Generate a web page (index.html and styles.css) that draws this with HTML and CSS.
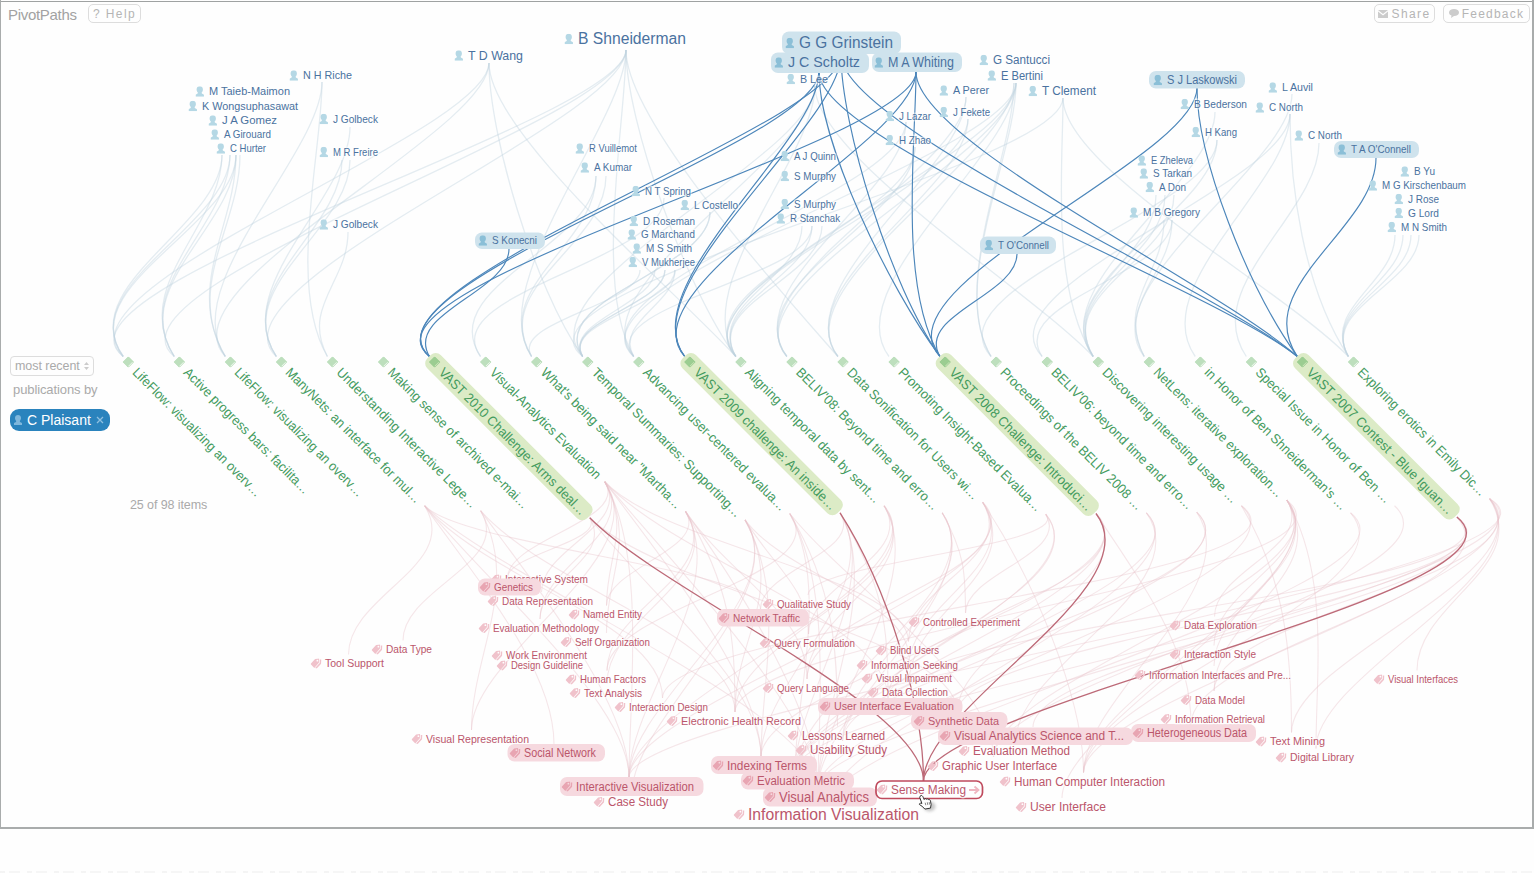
FILE: index.html
```html
<!DOCTYPE html>
<html lang="en">
<head>
<meta charset="utf-8">
<title>PivotPaths</title>
<link rel="stylesheet" href="styles.css">
</head>
<body>
<main class="frame">
  <svg class="canvas" width="1534" height="828" viewBox="0 0 1534 828">
    <defs>
      <symbol id="person" viewBox="0 0 8 10"><path d="M4 0C2.2 0 1 1.2 1 3C1 4.4 1.7 5.4 2.2 6L2 7L0 8V10H8V8L6 7L5.8 6C6.3 5.4 7 4.4 7 3C7 1.2 5.8 0 4 0Z"/></symbol>
      <symbol id="tag" viewBox="0 0 11 10"><path fill-rule="evenodd" d="M0 5.6L4.6 .6L8.6 0L8.4 4.2L3.8 9.4ZM6 2.2a.9.9 0 1 0 1.8 0a.9.9 0 1 0-1.8 0Z"/><path d="M9.2 .9L11 1L10.6 5.2L6.2 10L4.6 9.5L9.2 4.6Z"/></symbol>
      <symbol id="doc" viewBox="0 0 10 10"><path d="M0 1.2L1.6 0H10V8.6L8.6 10H0ZM8.3 1.6V8.8L9 8V1.6Z" fill-rule="evenodd"/></symbol>
    </defs>
    <g id="faint"></g>
    <g id="strong"></g>
    <g id="labels"></g>
    <g id="cursor" transform="translate(918.5 794.5)">
      <ellipse class="cursor-shadow" cx="11" cy="12" rx="6" ry="5"/>
      <path class="hand" d="M2 1.2C3.2.4 4.2 1.6 4.7 2.8L5.7 5C6.2 3.8 7.5 4 7.8 4.8C8.6 4 9.6 4.3 9.9 5.1C11 4.7 11.8 5.4 12 6.6L12.6 10L12 13.6L6.4 14.6L3.4 11.6L.9 10C.6 8.8 1.8 8.3 3.4 9L1.2 2.8Z"/>
      <path class="finger" d="M6.7 8.2l.6 2.5M8.8 7.8l.5 2.6M10.7 7.6l.3 2.4"/>
    </g>
  </svg>
  <div class="overlay">
    <header class="bar">
      <h1 class="brand">PivotPaths</h1>
      <button class="btn help">? Help</button>
      <span class="spacer"></span>
      <button class="btn share"><svg width="10" height="8" viewBox="0 0 10 8"><path d="M0 0H10L5 4ZM0 1.5L5 5.5L10 1.5V8H0Z"/></svg>Share</button>
      <button class="btn feedback"><svg width="10" height="9" viewBox="0 0 10 9"><path d="M5 0C8 0 10 1.4 10 3.5S8 7 5 7L2 9L2.5 6.5C1 6 0 5 0 3.5C0 1.4 2 0 5 0Z"/></svg>Feedback</button>
    </header>
    <aside class="query">
      <div class="select"><span>most recent</span><svg width="5" height="8" viewBox="0 0 5 8"><path d="M0 3L2.5 0L5 3ZM0 5L2.5 8L5 5Z"/></svg></div>
      <p class="by">publications by</p>
      <div class="chip"><svg width="8" height="10"><use href="#person"/></svg><span>C Plaisant</span><svg class="close" width="8" height="8" viewBox="0 0 8 8"><path d="M1 1L7 7M7 1L1 7"/></svg></div>
    </aside>
    <p class="count">25 of 98 items</p>
  </div>
</main>
<div class="page-edge"></div>
<script src="app.js"></script>
</body>
</html>
```
FILE: styles.css
```css
body { margin: 0; background: #fefefe; font-family: "Liberation Sans", Arial, sans-serif; overflow: hidden; height: 873px; display: flex; flex-direction: column; justify-content: space-between; }
.frame { display: grid; box-sizing: border-box; width: 1534px; height: 829px; background: linear-gradient(#9fa2a2, #9fa2a2) 0 1px / 100% 1px no-repeat, #fefefe; border: solid #a9acac; border-width: 0 2px 2px 1px; }
.canvas, .overlay { grid-area: 1 / 1; }
.canvas { display: block; margin-left: -1px; }
.overlay { display: flex; flex-direction: column; align-items: flex-start; min-height: 0; }
.bar { display: flex; align-items: flex-start; width: 1529px; box-sizing: border-box; padding: 4px 0 0 7px; }
.brand { margin: 2px 0 0; width: 80px; font-size: 15px; line-height: 18px; font-weight: 400; letter-spacing: -.3px; color: #a2a2a2; }
.btn { box-sizing: border-box; height: 19px; padding: 0; display: flex; align-items: center; justify-content: center; gap: 3px; background: #fefefe; border: 1px solid #ddd; border-radius: 5px; color: #b5b5b5; font: 12px "Liberation Sans", Arial, sans-serif; letter-spacing: 1.4px; }
.btn svg { fill: #ccc; }
.help { width: 53px; }
.share { width: 61px; margin-right: 8px; }
.feedback { width: 87px; letter-spacing: 1.2px; }
.spacer { flex: 1; }
.query { display: flex; flex-direction: column; align-items: flex-start; margin: 332px 0 0 9px; color: #aaa; font-size: 12.5px; }
.select { box-sizing: border-box; width: 84px; height: 20px; border: 1px solid #ddd; border-radius: 4px; display: flex; align-items: center; justify-content: space-between; padding: 0 4px; white-space: nowrap; letter-spacing: -.05px; }
.select svg { fill: #ccc; }
.by { margin: 6px 0 11px 3px; line-height: 16px; font-size: 13px; letter-spacing: -.1px; }
.chip { box-sizing: border-box; width: 100px; height: 22px; display: flex; align-items: center; gap: 5px; padding: 0 4px; border-radius: 9px; background: #2a83bd; color: #fff; font-size: 14px; letter-spacing: 0; white-space: nowrap; }
.chip svg { flex: none; fill: #7fb7dc; }
.chip .close { fill: none; stroke: #8fc0e0; stroke-width: 1.3; }
.count { margin: 66px 0 0 129px; font-size: 12.5px; line-height: 16px; color: #aaa; letter-spacing: -.1px; }
.page-edge { height: 2px; opacity: .8; background: repeating-linear-gradient(90deg, #f2f2f2 0 5px, #fefefe 5px 9px, #f4f4f4 9px 20px, #fefefe 20px 27px); }
.link { fill: none; }
.author-link { stroke: #bdd3de; stroke-width: 1.3; opacity: .4; }
.keyword-link { stroke: #e8c3cb; stroke-width: 1.1; opacity: .4; }
.author-strong { stroke: #4c86ba; stroke-width: 1.15; }
.keyword-strong { stroke: #bd6a78; stroke-width: 1.3; }
.label { paint-order: stroke; stroke: #fefefe; stroke-width: 3px; stroke-opacity: .5; stroke-linejoin: round; }
.label.lit { stroke: none; }
.author { fill: #4a72a0; }
.keyword { fill: #bb566b; }
.publication { fill: #459b5e; stroke: none; }
.author-icon { fill: #b5d8e5; }
.keyword-icon { fill: #f0c2cb; }
.publication-icon { fill: #bddfbd; }
.author-icon.lit { fill: #8bbfd7; }
.keyword-icon.lit { fill: #e8a5b2; }
.publication-icon.lit { fill: #9bcd91; }
.author-pill { fill: #cfe3ed; }
.keyword-pill { fill: #f6d9df; }
.publication-pill { fill: #dcebc6; }
.focus-pill { fill: #fefefe; stroke: #bf4a5d; stroke-width: 1.7; }
.arrow { fill: none; stroke: #efb6c1; stroke-width: 1.8; }
.cursor-shadow { fill: #777; opacity: .4; filter: blur(1.5px); }
.hand { fill: #fff; stroke: #333; stroke-width: 1; }
.finger { fill: none; stroke: #555; stroke-width: .7; }
```
FILE: app.js
```js
// [text, left, right, middle, font size, pill [left, right, top, bottom]]
const authors = [
  ["N H Riche", 303, 352, 75.5, 11.5], ["M Taieb-Maimon", 209, 290, 91.5, 11.5], ["K Wongsuphasawat", 202, 298, 106, 11.5],
  ["J A Gomez", 222, 277, 120.5, 11.5], ["A Girouard", 224, 271, 134.5, 11], ["C Hurter", 230, 266, 148.5, 11],
  ["J Golbeck", 333, 378, 119, 11], ["M R Freire", 333, 378, 152, 11], ["J Golbeck", 333, 378, 224.5, 11],
  ["T D Wang", 468, 523, 55.5, 13], ["B Shneiderman", 578, 686, 39, 16],
  ["R Vuillemot", 589, 637, 148.5, 11], ["A Kumar", 594, 632, 167.5, 11], ["N T Spring", 645, 691, 191, 11],
  ["L Costello", 694, 738, 205, 11], ["D Roseman", 643, 695, 221, 11], ["G Marchand", 641, 695, 234.5, 11],
  ["M S Smith", 646, 692, 248.5, 11], ["V Mukherjee", 642, 695, 262, 11],
  ["S Konecni", 492, 537, 240.5, 11, [475, 545, 232.5, 249]],
  ["G G Grinstein", 799, 893, 43, 16, [782, 901, 31.5, 54]],
  ["J C Scholtz", 788, 860, 62.5, 14.5, [771, 869, 52.5, 73]],
  ["M A Whiting", 888, 954, 62.5, 14, [872, 962, 52.5, 72]],
  ["B Lee", 800, 828, 79, 11], ["G Santucci", 993, 1050, 60, 12], ["E Bertini", 1001, 1043, 75.5, 12],
  ["A Perer", 953, 989, 90.5, 11], ["T Clement", 1042, 1096, 91, 12], ["J Fekete", 953, 990, 112, 11],
  ["J Lazar", 899, 931, 116, 11], ["H Zhao", 899, 931, 140, 11], ["A J Quinn", 794, 836, 156, 11],
  ["S Murphy", 794, 836, 176, 11], ["S Murphy", 794, 836, 204, 11], ["R Stanchak", 790, 840, 218.5, 11],
  ["T O'Connell", 998, 1049, 245, 11, [980, 1056, 236.5, 254]],
  ["S J Laskowski", 1167, 1237, 80, 12, [1149, 1245, 71, 88.5]],
  ["B Bederson", 1194, 1247, 104, 11], ["H Kang", 1205, 1237, 132, 11], ["L Auvil", 1282, 1313, 87.5, 11],
  ["C North", 1269, 1303, 107.5, 11], ["C North", 1308, 1342, 135.5, 11],
  ["T A O'Connell", 1351, 1411, 149.5, 11, [1334, 1419, 141, 158]],
  ["E Zheleva", 1151, 1193, 160.5, 11], ["S Tarkan", 1153, 1192, 173.5, 11], ["A Don", 1159, 1186, 187, 11],
  ["M B Gregory", 1143, 1200, 212.5, 11], ["B Yu", 1414, 1435, 171.5, 11], ["M G Kirschenbaum", 1382, 1466, 185.5, 11],
  ["J Rose", 1408, 1439, 199, 11], ["G Lord", 1408, 1439, 213, 11], ["M N Smith", 1401, 1447, 227, 11]
];

const keywords = [
  ["Interactive System", 505, 588, 579.5, 11], ["Genetics", 494, 533, 587, 11, [478, 541, 578.5, 595.5]],
  ["Data Representation", 502, 593, 601, 11], ["Named Entity", 583, 642, 614.5, 11], ["Evaluation Methodology", 493, 599, 628, 11],
  ["Self Organization", 575, 650, 642, 11], ["Design Guideline", 511, 583, 665.5, 11], ["Work Environment", 506, 587, 655.5, 11],
  ["Human Factors", 580, 646, 679.5, 11], ["Text Analysis", 584, 642, 693, 11], ["Interaction Design", 629, 708, 707, 11],
  ["Electronic Health Record", 681, 801, 721, 11.5], ["Data Type", 386, 432, 649.5, 11], ["Tool Support", 325, 384, 663.5, 11],
  ["Visual Representation", 426, 529, 739, 11.5], ["Social Network", 524, 596, 753, 12, [507.5, 605, 744, 761.5]],
  ["Interactive Visualization", 576, 694, 786.5, 12.5, [560, 703.5, 777, 796]], ["Case Study", 608, 668, 802, 12.5],
  ["Qualitative Study", 777, 851, 604, 11], ["Network Traffic", 733, 800, 618, 11, [717, 809, 609, 626.5]],
  ["Query Formulation", 774, 855, 643, 11], ["Query Language", 777, 849, 688, 11], ["Controlled Experiment", 923, 1020, 622, 11],
  ["Blind Users", 890, 939, 650.5, 11], ["Information Seeking", 871, 958, 665, 11], ["Visual Impairment", 876, 952, 678.5, 11],
  ["Data Collection", 882, 948, 692.5, 11], ["User Interface Evaluation", 834, 954, 706.5, 11.5, [818, 962.5, 698, 715]],
  ["Synthetic Data", 928, 999, 721, 11.5, [911, 1007.5, 712, 729.5]],
  ["Visual Analytics Science and T...", 954, 1124, 736, 12.5, [938, 1133, 727.5, 745]],
  ["Heterogeneous Data", 1147, 1247, 733, 12, [1131, 1256, 724, 742]],
  ["Lessons Learned", 802, 885, 735.5, 12], ["Usability Study", 810, 887, 750, 12], ["Evaluation Method", 973, 1070, 751, 12],
  ["Indexing Terms", 727, 807, 765.5, 12.5, [711, 817, 756, 774]], ["Evaluation Metric", 757, 845, 780.5, 12.5, [741, 854, 772, 789.5]],
  ["Visual Analytics", 779, 869, 797, 14, [763, 877, 787.5, 806.5]], ["Information Visualization", 748, 919, 814.5, 16],
  ["Graphic User Interface", 942, 1057, 766, 12.5], ["Human Computer Interaction", 1014, 1165, 781.5, 12.5],
  ["User Interface", 1030, 1106, 807, 12.5], ["Data Exploration", 1184, 1257, 625.5, 11], ["Interaction Style", 1184, 1256, 654.5, 11],
  ["Information Interfaces and Pre...", 1149, 1291, 675, 11], ["Data Model", 1195, 1245, 700, 11],
  ["Information Retrieval", 1175, 1265, 719, 11], ["Text Mining", 1270, 1325, 741.5, 11.5], ["Digital Library", 1290, 1354, 757.5, 11.5],
  ["Visual Interfaces", 1388, 1458, 679.5, 11], ["Sense Making", 891, 966, 789.5, 12.5, [876, 982.5, 781, 798.5], "focus"]
];

// [title, drawn length, highlighted]
const publications = [
  ["LifeFlow: visualizing an overv…", 178], ["Active progress bars: facilita…", 174], ["LifeFlow: visualizing an overv…", 178],
  ["ManyNets: an interface for mul…", 187], ["Understanding Interactive Lege…", 194], ["Making sense of archived e-mai…", 195],
  ["VAST 2010 Challenge: Arms deal…", 204, 1], ["Visual-Analytics Evaluation", 153], ["What's being said near \"Martha…", 195],
  ["Temporal Summaries: Supporting…", 207], ["Advancing user-centered evalua…", 198], ["VAST 2009 challenge: An inside…", 197, 1],
  ["Aligning temporal data by sent…", 187], ["BELIV'08: Beyond time and erro…", 197], ["Data Sonification for Users wi…", 182],
  ["Promoting Insight-Based Evalua…", 199], ["VAST 2008 Challenge: Introduci…", 198, 1], ["Proceedings of the BELIV 2008 …", 197],
  ["BELIV'06: beyond time and erro…", 196], ["Discovering interesting usage …", 187], ["NetLens: iterative exploration…", 179],
  ["in Honor of Ben Shneiderman's …", 197], ["Special Issue in Honor of Ben …", 187], ["VAST 2007 Contest - Blue Iguan…", 203, 1],
  ["Exploring erotics in Emily Dic…", 177]
];

const NS = "http://www.w3.org/2000/svg";
function add(parent, name, attrs, text) {
  const el = document.createElementNS(NS, name);
  for (const k in attrs) el.setAttribute(k, attrs[k]);
  if (text) el.textContent = text;
  parent.appendChild(el);
  return el;
}
const layer = id => document.getElementById(id);
const pubX = i => 128.7 + 51.05 * i;
const pubEnd = i => {
  const d = publications[i][1] / Math.SQRT2;
  return [pubX(i) + 4.5 + d + 6, 372.5 + d + 1];
};

function authorLink(x, y, i, strong) {
  const ex = pubX(i) - 5.5, ey = 356.5;
  const reach = (40 + Math.abs(ex - x) * 0.1) * Math.min(1, (ey - y) / 200);
  const drop = Math.min(70, (ey - y) * 0.4);
  add(layer(strong ? "strong" : "faint"), "path", {
    class: "link " + (strong ? "author-strong" : "author-link"),
    d: `M${x} ${y}C${x} ${y + drop} ${ex - reach} ${ey - drop} ${ex} ${ey}`
  });
}
function keywordLink(i, x, y, strong) {
  const [sx, sy] = pubEnd(i);
  const reach = (40 + Math.abs(sx - x) * 0.1) * Math.min(1, (y - sy) / 190);
  const drop = Math.min(75, (y - sy) * 0.4);
  add(layer(strong ? "strong" : "faint"), "path", {
    class: "link " + (strong ? "keyword-strong" : "keyword-link"),
    d: `M${sx} ${sy}C${sx + reach} ${sy + drop} ${x} ${y - drop} ${x} ${y}`
  });
}

// Highlighted paths: [x, y, publications]
[[841, 55, [6, 11, 16, 23]], [819, 72, [6, 11, 16, 23]], [916, 72, [6, 11, 16, 23]], [509, 249, [6]],
 [1017, 254, [16]], [1197, 88, [16, 23]], [1376, 158, [23]]
].forEach(([x, y, to]) => to.forEach(i => authorLink(x, y, i, true)));
[6, 11, 16, 23].forEach(i => keywordLink(i, 923.5, 781, true));

[[222, 155, [0, 1]], [230, 155, [0, 1]], [236, 155, [0, 1, 2]], [240, 155, [2]], [322, 82, [2, 4]], [350, 127, [3]],
 [342, 160, [3]], [350, 160, [3]], [348, 232, [4]], [489, 63, [0, 2, 9, 12]], [626, 50, [0, 1, 3, 8, 10, 12, 14]],
 [596, 176, [7, 8]], [606, 176, [8]], [664, 198, [7]], [710, 212, [9, 9]], [655, 270, [9]],
 [665, 270, [9, 9]], [675, 270, [9, 10]], [815, 86, [9, 10, 12, 19]], [640, 270, [8]], [802, 226, [12]], [812, 226, [12, 10]],
 [822, 226, [12]], [915, 147, [12, 13]], [906, 122, [13, 10]], [968, 119, [12, 14]], [966, 97, [13, 14]],
 [1016, 83, [10, 12, 13, 15, 17]], [1014, 83, [14, 17]], [1063, 98, [9, 19, 24]], [1215, 112, [19]], [1217, 140, [19, 17]],
 [1156, 195, [19]], [1165, 195, [19]], [1174, 195, [19]], [1164, 220, [20]], [1172, 220, [20, 18]], [1292, 94, [20]],
 [1290, 114, [21, 24, 18]], [1319, 143, [22]], [1395, 235, [24]], [1403, 235, [24]], [1411, 235, [24]], [1419, 235, [24]]
].forEach(([x, y, to]) => to.forEach(i => authorLink(x, y, i)));

const topics = {
  3: ["Tool Support", "Social Network", "Interactive Visualization", "Network Traffic", "Visual Analytics", "Interaction Design"],
  4: ["Data Type", "Visual Representation", "Interactive Visualization", "Electronic Health Record"],
  6: ["Genetics", "Evaluation Methodology", "Synthetic Data", "Indexing Terms"],
  7: ["Data Representation", "Named Entity", "Evaluation Methodology", "Self Organization", "Visual Representation", "Interactive Visualization", "Indexing Terms", "User Interface Evaluation", "Visual Analytics", "Blind Users", "Genetics"],
  8: ["Named Entity", "Text Analysis", "Interactive Visualization", "Human Factors", "Visual Analytics", "Electronic Health Record", "Query Language"],
  9: ["Interactive Visualization", "Electronic Health Record", "Query Formulation", "Indexing Terms", "Information Seeking", "Case Study"],
  10: ["Visual Analytics", "Evaluation Metric", "Human Factors", "Lessons Learned", "Graphic User Interface"],
  11: ["Network Traffic", "Evaluation Metric", "Indexing Terms", "Visual Analytics", "User Interface Evaluation"],
  12: ["Interactive Visualization", "Query Formulation", "Query Language", "Electronic Health Record", "Visual Analytics"],
  13: ["Evaluation Metric", "Usability Study", "Visual Analytics", "Controlled Experiment"],
  14: ["Blind Users", "Visual Impairment", "Data Collection", "Query Language", "Interactive Visualization", "Human Computer Interaction"],
  15: ["Qualitative Study", "Controlled Experiment", "Usability Study", "Evaluation Metric"],
  16: ["Heterogeneous Data", "Indexing Terms", "Evaluation Metric", "User Interface Evaluation", "Synthetic Data"],
  17: ["Evaluation Metric", "Information Visualization", "Evaluation Method"],
  18: ["Evaluation Metric", "Human Computer Interaction", "Usability Study"],
  19: ["Visual Analytics", "Text Mining", "Interaction Design"],
  20: ["Data Exploration", "Interaction Style", "Data Model", "Graphic User Interface", "Human Computer Interaction", "User Interface", "Digital Library", "Electronic Health Record", "Information Interfaces and Pre..."],
  21: ["Human Computer Interaction", "Information Visualization"],
  22: ["Graphic User Interface"],
  23: ["Visual Analytics Science and T...", "Heterogeneous Data", "Synthetic Data", "User Interface Evaluation", "Evaluation Metric"],
  24: ["Text Mining", "Digital Library", "Visual Interfaces", "Data Model", "Interactive Visualization", "Human Computer Interaction", "Visual Analytics"]
};
for (const i in topics) topics[i].forEach(name => {
  const k = keywords.find(k => k[0] === name);
  keywordLink(+i, (k[1] + k[2]) / 2 - 6, k[3] - 9);
});

function drawLabel([text, x1, x2, y, size, pill, focus], kind, symbol) {
  const g = layer("labels");
  if (pill) add(g, "rect", {
    class: focus ? "focus-pill" : kind + "-pill", x: pill[0], y: pill[2], width: pill[1] - pill[0], height: pill[3] - pill[2], rx: focus ? 6 : 7
  });
  const lit = pill && !focus ? " lit" : "";
  const w = kind === "author" ? 8.5 : 11, h = 10.5;
  add(g, "use", { href: "#" + symbol, class: kind + "-icon" + lit, x: x1 - (kind === "author" ? 13.5 : 14.5), y: y - h / 2, width: w, height: h });
  add(g, "text", {
    class: "label " + kind + lit, x: x1, y: y + size * 0.34, "font-size": size, textLength: x2 - x1, lengthAdjust: "spacingAndGlyphs"
  }, text);
}
authors.forEach(a => drawLabel(a, "author", "person"));
keywords.forEach(k => drawLabel(k, "keyword", "tag"));
add(layer("labels"), "path", { class: "arrow", d: "M969 790H978M974.5 786.5L978.5 790L974.5 793.5" });

publications.forEach(([title, length, lit], i) => {
  const g = add(layer("labels"), "g", { transform: `translate(${pubX(i)} 362) rotate(45)` });
  if (lit) add(g, "rect", { class: "publication-pill", x: -8, y: -9, width: length + 22, height: 19, rx: 7 });
  add(g, "use", { href: "#doc", class: "publication-icon" + (lit ? " lit" : ""), x: -4.5, y: -4, width: 8.5, height: 8.5 });
  add(g, "text", { class: "label publication", x: 10, y: 5.8, "font-size": 13.5, textLength: length - 2, lengthAdjust: "spacingAndGlyphs" }, title);
});
```
